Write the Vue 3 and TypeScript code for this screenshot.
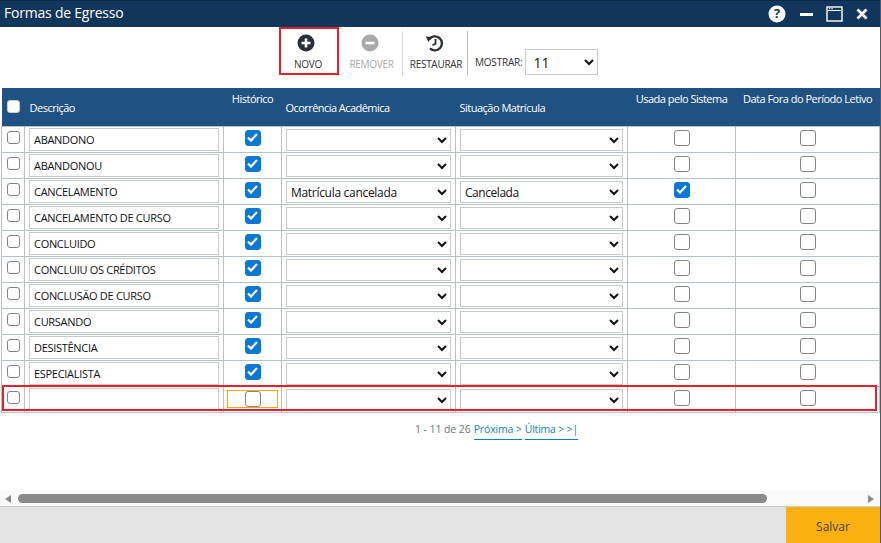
<script setup lang="ts">
interface Row {
  name: string
  hist: boolean
  oc: string
  sit: string
  usada: boolean
}
const rows: Row[] = [
  { name: 'ABANDONO', hist: true, oc: '', sit: '', usada: false },
  { name: 'ABANDONOU', hist: true, oc: '', sit: '', usada: false },
  { name: 'CANCELAMENTO', hist: true, oc: 'Matrícula cancelada', sit: 'Cancelada', usada: true },
  { name: 'CANCELAMENTO DE CURSO', hist: true, oc: '', sit: '', usada: false },
  { name: 'CONCLUIDO', hist: true, oc: '', sit: '', usada: false },
  { name: 'CONCLUIU OS CRÉDITOS', hist: true, oc: '', sit: '', usada: false },
  { name: 'CONCLUSÃO DE CURSO', hist: true, oc: '', sit: '', usada: false },
  { name: 'CURSANDO', hist: true, oc: '', sit: '', usada: false },
  { name: 'DESISTÊNCIA', hist: true, oc: '', sit: '', usada: false },
  { name: 'ESPECIALISTA', hist: true, oc: '', sit: '', usada: false },
  { name: '', hist: false, oc: '', sit: '', usada: false },
]
</script>

<template>
  <div class="win">
    <header class="title">
      <span class="title-text">Formas de Egresso</span>
      <div class="win-icons">
        <svg width="18" height="18" viewBox="0 0 18 18"><circle cx="9" cy="9" r="8.5" fill="#fff" /><text x="9" y="13.2" text-anchor="middle" class="q">?</text></svg>
        <span class="minimize"></span>
        <svg width="18" height="16" viewBox="0 0 18 16"><rect x="1" y="1" width="15" height="14" fill="#12355b" stroke="#fff" stroke-width="1.4" /><rect x="2" y="4" width="13" height="1" fill="#fff" /><path d="M3 2.700h4" stroke="#fff" stroke-width="1" stroke-dasharray="1 .6" /></svg>
        <svg width="12" height="12" viewBox="0 0 12 12"><path d="M1.500 1.500l9 9M10.500 1.500l-9 9" stroke="#fff" stroke-width="2.800" /></svg>
      </div>
    </header>

    <div class="toolbar">
      <button class="tool novo">
        <svg width="18" height="18" viewBox="0 0 18 18"><circle cx="9" cy="9" r="8.500" fill="#2b2f36" /><path d="M9 4.500v9M4.500 9h9" stroke="#fff" stroke-width="2.600" /></svg>
        <span>NOVO</span>
      </button>
      <button class="tool remover">
        <svg width="18" height="18" viewBox="0 0 18 18"><circle cx="9" cy="9" r="8.500" fill="#a9a9a9" /><path d="M4.500 9h9" stroke="#fff" stroke-width="2.600" /></svg>
        <span>REMOVER</span>
      </button>
      <button class="tool restaurar">
        <svg width="19" height="18" viewBox="0 0 19 18"><path d="M4.300 5.200A7 7 0 1 1 5 14.400" fill="none" stroke="#2b2f36" stroke-width="2.300" /><path d="M0.800 2.500l6.200.4-3.600 5z" fill="#2b2f36" /><path d="M10.500 5v4.600l-3 1.600" fill="none" stroke="#2b2f36" stroke-width="1.800" /></svg>
        <span>RESTAURAR</span>
      </button>
      <div class="mostrar">
        <span>MOSTRAR:</span>
        <div class="sel-box page-size">
          <span>11</span>
          <svg class="chev" width="10" height="7" viewBox="0 0 10 7"><path d="M1 1l4 4 4-4" fill="none" stroke="#111" stroke-width="2" /></svg>
        </div>
      </div>
    </div>

    <main class="content">
      <table class="grid">
        <colgroup>
          <col class="c1" /><col class="c2" /><col class="c3" /><col class="c4" /><col class="c5" /><col class="c6" /><col class="c7" />
        </colgroup>
        <thead>
          <tr>
            <th class="head-check"><span class="check head-box"></span></th>
            <th class="head-low first">Descrição</th>
            <th class="head-top center">Histórico</th>
            <th class="head-low tight">Ocorrência Acadêmica</th>
            <th class="head-low">Situação Matrícula</th>
            <th class="head-top center">Usada pelo Sistema</th>
            <th class="head-top center">Data Fora do Período Letivo</th>
          </tr>
        </thead>
        <tbody>
          <tr v-for="(r, i) in rows" :key="i">
            <td class="center mark"><span class="check small"></span></td>
            <td class="pad"><div class="field">{{ r.name }}</div></td>
            <td class="center mark">
              <span class="focus-wrap" :class="{ focused: i === 10 }">
                <span class="check" :class="{ on: r.hist }">
                  <svg v-if="r.hist" width="11" height="9" viewBox="0 0 11 9"><path d="M1 4.500l3 3 6-6.500" fill="none" stroke="#fff" stroke-width="2.200" /></svg>
                </span>
              </span>
            </td>
            <td class="pad">
              <div class="sel-box cell-sel">
                <span>{{ r.oc }}</span>
                <svg class="chev" width="10" height="7" viewBox="0 0 10 7"><path d="M1 1l4 4 4-4" fill="none" stroke="#111" stroke-width="2" /></svg>
              </div>
            </td>
            <td class="pad">
              <div class="sel-box cell-sel sit">
                <span>{{ r.sit }}</span>
                <svg class="chev" width="10" height="7" viewBox="0 0 10 7"><path d="M1 1l4 4 4-4" fill="none" stroke="#111" stroke-width="2" /></svg>
              </div>
            </td>
            <td class="center mark">
              <span class="check" :class="{ on: r.usada }">
                <svg v-if="r.usada" width="11" height="9" viewBox="0 0 11 9"><path d="M1 4.500l3 3 6-6.500" fill="none" stroke="#fff" stroke-width="2.200" /></svg>
              </span>
            </td>
            <td class="center mark"><span class="check"></span></td>
          </tr>
        </tbody>
      </table>
      <div class="highlight"></div>

      <div class="pager">
        <span class="count">1 - 11 de 26</span>
        <a>Próxima &gt;</a>
        <a class="last">Última &gt; &gt;|</a>
      </div>
    </main>

    <div class="hscroll">
      <span class="arrow left"></span>
      <div class="track"><div class="thumb"></div></div>
      <span class="arrow right"></span>
    </div>

    <footer class="footer">
      <button class="save">Salvar</button>
    </footer>
  </div>
</template>

<style>
html, body { margin: 0; background: #fff; overflow: hidden; }
</style>

<style scoped>
.win {
  width: 881px;
  height: 543px;
  display: flex;
  flex-direction: column;
  overflow: hidden;
  box-sizing: border-box;
  border-right: 1px solid #4a5a6a;
  font-family: "Open Sans", "Noto Sans", sans-serif;
  background: #fff;
  color: #222;
}
.title {
  height: 27px;
  flex: none;
  box-sizing: border-box;
  border-top: 1px solid #0c2a49;
  background: #12355b;
  display: flex;
  align-items: center;
  justify-content: space-between;
  padding: 0 11px 0 4px;
  color: #fff;
}
.title-text { font-size: 14px; letter-spacing: -0.22px; margin-bottom: 3px; }
.win-icons { display: flex; align-items: center; gap: 12px; margin-right: 1px; }
.q { font: bold 13px "Open Sans", sans-serif; fill: #12355b; }
.minimize { width: 13px; height: 3px; background: #fff; margin: 0 1px 0 2px; }

.toolbar {
  height: 61px;
  flex: none;
  box-sizing: border-box;
  display: flex;
  align-items: flex-start;
  padding-left: 279px;
}
.tool {
  border: 0;
  background: none;
  padding: 7px 0 0;
  margin: 0;
  height: 48px;
  box-sizing: border-box;
  display: flex;
  flex-direction: column;
  align-items: center;
  font: 10px "Open Sans", sans-serif;
  letter-spacing: -0.3px;
  color: #333;
  gap: 5px;
}
.tool span { line-height: 14px; }
.novo { width: 60px; border: 2px solid #e8202a; padding: 5px 2px 0 0; }
.novo svg { margin-right: 4px; }
.remover { width: 64px; color: #aaa; border-right: 1px solid #ddd; height: 45px; margin-top: 4px; padding: 3px 0 0 2px; }
.remover svg { margin-right: 4px; }
.restaurar { width: 65px; color: #333; border-right: 1px solid #bbb; height: 45px; margin-top: 4px; padding: 3px 0 0 2px; }
.restaurar svg { margin-right: 4px; }
.mostrar {
  display: flex;
  align-items: center;
  margin: 22px 0 0 7px;
  gap: 3px;
  font-size: 10px;
  letter-spacing: -0.2px;
  color: #333;
}
.sel-box {
  position: relative;
  box-sizing: border-box;
  border: 1px solid #c9c9c9;
  background: #fff;
  display: flex;
  align-items: center;
  font-size: 12px;
  color: #111;
}
.page-size { width: 73px; height: 26px; padding-left: 7px; font-size: 14px; letter-spacing: 0; }
.chev { position: absolute; right: 3px; top: 50%; margin-top: -3px; }

.content { position: relative; flex: 1; min-height: 0; padding: 0 2px 0 1px; }
.grid {
  width: 878px;
  border-collapse: collapse;
  table-layout: fixed;
}
.c1 { width: 23px; }
.c2 { width: 199px; }
.c3 { width: 58px; }
.c4 { width: 174px; }
.c5 { width: 172px; }
.c6 { width: 108px; }
.c7 { width: 144px; }
thead th {
  height: 38px;
  box-sizing: border-box;
  background: #1f5283;
  color: #fff;
  font-size: 11px;
  font-weight: 400;
  text-align: left;
  padding: 0;
  letter-spacing: -0.5px;
  white-space: nowrap;
}
.head-low { padding: 1px 0 0 4px; vertical-align: middle; }
.head-low.first { padding-left: 5px; }
.head-low.tight { letter-spacing: -0.55px; }
.head-top { vertical-align: top; padding-top: 3px; }
.head-check { text-align: center; padding: 0; line-height: 0; }
th.center { text-align: center; }
td.center { text-align: center; }
tbody td {
  height: 26px;
  box-sizing: border-box;
  border: 1px solid #b5c1c5;
  padding: 0;
  vertical-align: middle;
}
td.mark { line-height: 0; font-size: 0; padding-bottom: 3px; }
td.pad { padding: 0 4px; }
.field, .cell-sel {
  height: 23px;
  box-sizing: border-box;
  border: 1px solid #c9c9c9;
  display: flex;
  align-items: center;
  padding-left: 4px;
  font-size: 11px;
  letter-spacing: -0.3px;
  color: #111;
  white-space: nowrap;
}
.cell-sel {
  height: 22px;
  margin-top: 1px;
  font-size: 12px;
  letter-spacing: -0.3px;
  padding-top: 1px;
}
.cell-sel.sit { font-size: 12px; letter-spacing: -0.45px; }
.check {
  display: inline-flex;
  align-items: center;
  justify-content: center;
  width: 15px;
  height: 15px;
  box-sizing: border-box;
  border: 1px solid #858585;
  border-radius: 3px;
  background: #fff;
  vertical-align: middle;
}
td.center .check { width: 16px; height: 16px; }
td.center .check.small { width: 13px; height: 13px; }
.check.on { background: #0a78d4; border-color: #0a78d4; }
.head-box { width: 13px; height: 13px; border-color: #ccc; }
.focus-wrap { display: inline-flex; align-items: center; justify-content: center; width: 51px; height: 18px; box-sizing: border-box; }
.focused { border: 1px solid #f2a71b; margin-top: 3px; }
.highlight {
  position: absolute;
  left: 2px;
  top: -1px;
  margin-top: 298px;
  width: 875px;
  height: 26px;
  box-sizing: border-box;
  border: 2px solid #e8202a;
  pointer-events: none;
}
.pager {
  margin: 7px 0 0 414px;
  display: flex;
  gap: 3px;
  font-size: 10.500px;
  letter-spacing: -0.15px;
  color: #6b7580;
  line-height: 19px;
}
.count { letter-spacing: -0.08px; }
.pager a { color: #1080b8; border-bottom: 1px solid #0a7fc0; }
.pager .last { letter-spacing: -0.2px; }

.hscroll {
  height: 15px;
  flex: none;
  display: flex;
  align-items: center;
  background: #fafafa;
  gap: 7px;
  padding: 0 6px 0 5px;
}
.arrow { width: 0; height: 0; border-top: 4px solid transparent; border-bottom: 4px solid transparent; }
.left { border-right: 6px solid #8a8a8a; }
.right { border-left: 6px solid #8a8a8a; }
.track { flex: 1; height: 9px; }
.thumb { width: 749px; height: 9px; border-radius: 5px; background: #8a8a8a; }

.footer {
  height: 37px;
  flex: none;
  box-sizing: border-box;
  border-top: 1px solid #ccc;
  background: #e4e4e4;
  display: flex;
  justify-content: flex-end;
}
.save {
  width: 94px;
  border: 0;
  background: #fdb012;
  font: 12px "Open Sans", sans-serif;
  color: #444;
  padding: 2px 0 0;
}
</style>
